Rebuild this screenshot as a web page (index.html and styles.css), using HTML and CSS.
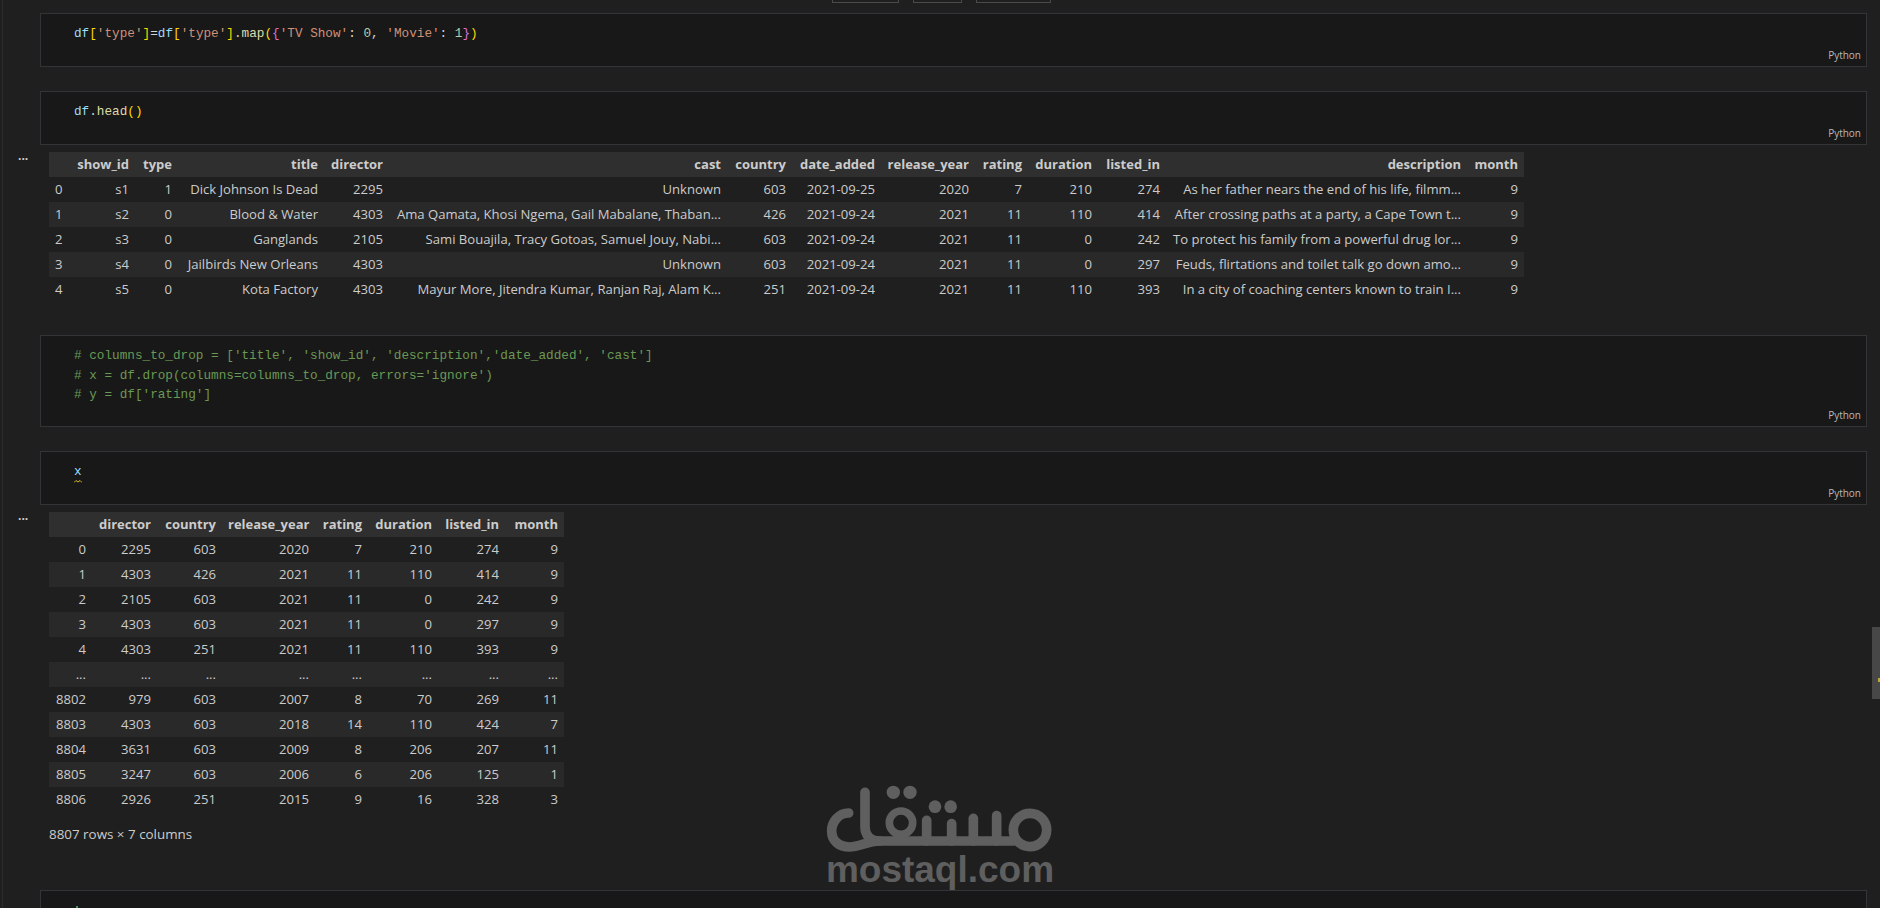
FILE: index.html
```html
<!DOCTYPE html>
<html lang="en">
<head>
<meta charset="utf-8">
<title>Notebook</title>
<link rel="stylesheet" href="styles.css">
</head>
<body>
<div class="rail"></div>
<main class="notebook">
  <div class="toolbar"><span class="tb tb1"></span><span class="tb tb2"></span><span class="tb tb3"></span></div>

  <section class="cell c1">
    <pre class="code"><span class="v">df</span><span class="b">[</span><span class="s">'type'</span><span class="b">]</span><span class="p">=</span><span class="v">df</span><span class="b">[</span><span class="s">'type'</span><span class="b">]</span><span class="p">.</span><span class="f">map</span><span class="b">(</span><span class="m">{</span><span class="s">'TV Show'</span><span class="p">: </span><span class="n">0</span><span class="p">, </span><span class="s">'Movie'</span><span class="p">: </span><span class="n">1</span><span class="m">}</span><span class="b">)</span></pre>
    <span class="lang">Python</span>
  </section>

  <section class="cell c2">
    <pre class="code"><span class="v">df</span><span class="p">.</span><span class="f">head</span><span class="b">()</span></pre>
    <span class="lang">Python</span>
  </section>

  <div class="output o1">
    <span class="more">...</span>
    <table class="df t1">
      <colgroup><col class="a0"><col class="a1"><col class="a2"><col class="a3"><col class="a4"><col class="a5"><col class="a6"><col class="a7"><col class="a8"><col class="a9"><col class="a10"><col class="a11"><col class="a12"><col class="a13"></colgroup>
      <thead><tr><th></th><th>show_id</th><th>type</th><th>title</th><th>director</th><th>cast</th><th>country</th><th>date_added</th><th>release_year</th><th>rating</th><th>duration</th><th>listed_in</th><th>description</th><th>month</th></tr></thead>
      <tbody>
      <tr><td class="ix">0</td><td>s1</td><td>1</td><td>Dick Johnson Is Dead</td><td>2295</td><td>Unknown</td><td>603</td><td>2021-09-25</td><td>2020</td><td>7</td><td>210</td><td>274</td><td>As her father nears the end of his life, filmm...</td><td>9</td></tr>
      <tr><td class="ix">1</td><td>s2</td><td>0</td><td>Blood &amp; Water</td><td>4303</td><td>Ama Qamata, Khosi Ngema, Gail Mabalane, Thaban...</td><td>426</td><td>2021-09-24</td><td>2021</td><td>11</td><td>110</td><td>414</td><td>After crossing paths at a party, a Cape Town t...</td><td>9</td></tr>
      <tr><td class="ix">2</td><td>s3</td><td>0</td><td>Ganglands</td><td>2105</td><td>Sami Bouajila, Tracy Gotoas, Samuel Jouy, Nabi...</td><td>603</td><td>2021-09-24</td><td>2021</td><td>11</td><td>0</td><td>242</td><td>To protect his family from a powerful drug lor...</td><td>9</td></tr>
      <tr><td class="ix">3</td><td>s4</td><td>0</td><td>Jailbirds New Orleans</td><td>4303</td><td>Unknown</td><td>603</td><td>2021-09-24</td><td>2021</td><td>11</td><td>0</td><td>297</td><td>Feuds, flirtations and toilet talk go down amo...</td><td>9</td></tr>
      <tr><td class="ix">4</td><td>s5</td><td>0</td><td>Kota Factory</td><td>4303</td><td>Mayur More, Jitendra Kumar, Ranjan Raj, Alam K...</td><td>251</td><td>2021-09-24</td><td>2021</td><td>11</td><td>110</td><td>393</td><td>In a city of coaching centers known to train I...</td><td>9</td></tr>
      </tbody>
    </table>
  </div>

  <section class="cell c3">
    <pre class="code cm"># columns_to_drop = ['title', 'show_id', 'description','date_added', 'cast']
# x = df.drop(columns=columns_to_drop, errors='ignore')
# y = df['rating']</pre>
    <span class="lang">Python</span>
  </section>

  <section class="cell c4">
    <pre class="code"><span class="x">x</span></pre>
    <svg class="squig" viewBox="0 0 8 3" width="8" height="3" aria-hidden="true"><path d="M0 2.5 L2 .5 L4 2 L6 .5 L8 2.5" fill="none" stroke="#d7ba25" stroke-width="1"/></svg>
    <span class="lang">Python</span>
  </section>

  <div class="output o2">
    <span class="more">...</span>
    <table class="df t2">
      <colgroup><col class="r0"><col class="r1"><col class="r2"><col class="r3"><col class="r4"><col class="r5"><col class="r6"><col class="r7"></colgroup>
      <thead><tr><th></th><th>director</th><th>country</th><th>release_year</th><th>rating</th><th>duration</th><th>listed_in</th><th>month</th></tr></thead>
      <tbody>
      <tr><td>0</td><td>2295</td><td>603</td><td>2020</td><td>7</td><td>210</td><td>274</td><td>9</td></tr>
      <tr><td>1</td><td>4303</td><td>426</td><td>2021</td><td>11</td><td>110</td><td>414</td><td>9</td></tr>
      <tr><td>2</td><td>2105</td><td>603</td><td>2021</td><td>11</td><td>0</td><td>242</td><td>9</td></tr>
      <tr><td>3</td><td>4303</td><td>603</td><td>2021</td><td>11</td><td>0</td><td>297</td><td>9</td></tr>
      <tr><td>4</td><td>4303</td><td>251</td><td>2021</td><td>11</td><td>110</td><td>393</td><td>9</td></tr>
      <tr><td>...</td><td>...</td><td>...</td><td>...</td><td>...</td><td>...</td><td>...</td><td>...</td></tr>
      <tr><td>8802</td><td>979</td><td>603</td><td>2007</td><td>8</td><td>70</td><td>269</td><td>11</td></tr>
      <tr><td>8803</td><td>4303</td><td>603</td><td>2018</td><td>14</td><td>110</td><td>424</td><td>7</td></tr>
      <tr><td>8804</td><td>3631</td><td>603</td><td>2009</td><td>8</td><td>206</td><td>207</td><td>11</td></tr>
      <tr><td>8805</td><td>3247</td><td>603</td><td>2006</td><td>6</td><td>206</td><td>125</td><td>1</td></tr>
      <tr><td>8806</td><td>2926</td><td>251</td><td>2015</td><td>9</td><td>16</td><td>328</td><td>3</td></tr>
      </tbody>
    </table>
    <p class="shape">8807 rows × 7 columns</p>
  </div>

  <section class="cell c5">
    <span class="stub"></span>
  </section>
</main>

<div class="scroll"><span class="tick"></span></div>

<div class="mark">
  <svg class="logo" viewBox="0 0 960 210" width="320" height="70" aria-hidden="true">
    <g fill="none" stroke="#5f5f5f" stroke-width="29" stroke-linecap="round" stroke-linejoin="round">
      <path d="M206 84 C175 84 155 112 155 138 C155 168 178 186 208 186 C 240 186 262 168 300 168 H700"/>
      <path d="M255 22 V125 C255 150 270 168 300 168"/>
      <path d="M440 106 V168"/>
      <path d="M515 116 V168"/>
      <path d="M580 100 V168"/>
      <path d="M650 92 V168"/>
      <circle cx="750" cy="135" r="50"/>
    </g>
    <circle cx="363" cy="113" r="35" fill="none" stroke="#5f5f5f" stroke-width="23"/>
    <g fill="#5f5f5f">
      <circle cx="340" cy="22" r="20"/>
      <circle cx="390" cy="22" r="20"/>
      <circle cx="465" cy="65" r="19"/>
      <circle cx="512" cy="65" r="19"/>
    </g>
  </svg>
  <span class="domain">mostaql.com</span>
</div>
</body>
</html>
```
FILE: styles.css
```css
* { box-sizing: border-box; }
html, body { margin: 0; height: 100%; overflow: hidden; }
body { background: #1f1f1f; position: relative; width: 1880px; height: 908px; font-family: "Open Sans", sans-serif; }

.rail { position: absolute; left: 2px; top: 0; bottom: 0; width: 1px; background: #2c2c2c; }

.notebook { display: flex; flex-direction: column; padding-left: 40px; padding-right: 13px; }

.toolbar { height: 13px; display: flex; align-items: flex-start; padding-left: 792px; gap: 14px; }
.tb { height: 3px; border: 1px solid #4a4a4a; border-top: 0; }
.tb1 { width: 67px; }
.tb2 { width: 49px; }
.tb3 { width: 75px; }

.cell { position: relative; background: #181818; border: 1px solid #333338; flex: none; }
.c1, .c2, .c4 { height: 54px; }
.c2, .c4 { margin-top: 24px; }
.c3 { height: 92px; }
.c5 { height: 40px; }

.code {
  margin: 0;
  padding: 10px 0 0 33px;
  font: 12.7px/19.5px "Liberation Mono", monospace;
  color: #d4d4d4;
}
.v { color: #9cdcfe; }
.b { color: #ffd700; }
.s { color: #ce9178; }
.p { color: #d4d4d4; }
.f { color: #dcdcaa; }
.m { color: #da70d6; }
.n { color: #b5cea8; }
.cm { color: #6a9955; }
.x { color: #9cdcfe; }

.lang {
  position: absolute;
  right: 5px;
  bottom: 4px;
  font-size: 10px;
  line-height: 14px;
  color: #b8b8b8;
}
.squig { position: absolute; left: 33px; top: 28px; }
.stub { position: absolute; left: 35px; top: 15px; width: 2px; height: 3px; background: #4f8f5f; }

.output { position: relative; padding: 7px 0 0 9px; flex: none; }
.o1 { height: 190px; }
.o2 { height: 385px; }
.more { position: absolute; left: -22px; top: 4px; color: #cfcfcf; font-size: 12px; font-weight: 700; line-height: 14px; }

.df {
  border-collapse: collapse;
  border-spacing: 0;
  table-layout: fixed;
  font-size: 13.1px;
  color: #cccccc;
}
.t1 { width: 1475px; }
.t2 { width: 515px; }
.df th, .df td {
  height: 25px;
  padding: 0 6px;
  border: 0;
  text-align: right;
  white-space: nowrap;
  overflow: hidden;
  font-weight: 400;
  line-height: 25px;
}
.df th { font-weight: 700; font-size: 13px; }
.df thead tr { background: #2f2f2f; }
.df tbody tr:nth-child(odd) { background: #1f1f1f; }
.df tbody tr:nth-child(even) { background: #292929; }
.t1 .ix { text-align: left; }

.a0 { width: 22px; } .a1 { width: 64px; } .a2 { width: 43px; } .a3 { width: 146px; } .a4 { width: 65px; }
.a5 { width: 338px; } .a6 { width: 65px; } .a7 { width: 89px; } .a8 { width: 94px; } .a9 { width: 53px; }
.a10 { width: 70px; } .a11 { width: 68px; } .a12 { width: 301px; } .a13 { width: 57px; }

.r0 { width: 43px; } .r1 { width: 65px; } .r2 { width: 65px; } .r3 { width: 93px; }
.r4 { width: 53px; } .r5 { width: 70px; } .r6 { width: 67px; } .r7 { width: 59px; }

.shape { margin: 13px 0 0; font-size: 13.4px; line-height: 18px; color: #cccccc; }

.scroll { position: absolute; right: 0; top: 627px; width: 8px; height: 72px; background: #474747; }
.tick { position: absolute; right: 0; top: 51px; width: 2px; height: 4px; background: #c8a33a; }

.mark { position: absolute; left: 780px; top: 785px; width: 320px; display: flex; flex-direction: column; align-items: center; }
.logo { display: block; }
.domain { font: 700 37px/30px "Liberation Sans", sans-serif; color: #5f5f5f; }
```
